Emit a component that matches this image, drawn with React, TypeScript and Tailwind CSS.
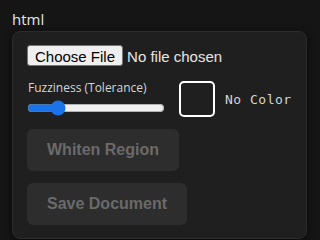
import React, { useState } from "react";

export default function App() {
  const [fuzz, setFuzz] = useState(19);

  return (
    <div className="w-[320px] h-[240px] overflow-hidden bg-[#151515] text-[#e6e6e6] font-['Open_Sans',sans-serif]">
      <div className="px-3 pt-[9px]">
        <div className="text-[15px] leading-[20px]">html</div>
        <div className="mt-[2px] w-[295px] h-[208px] rounded-lg border border-[#2c2c2c] bg-[#1f1f1f] shadow-[0_2px_8px_rgba(0,0,0,0.6)] px-[14px] pt-[14px]">
          {/* File picker */}
          <div className="h-[21px] flex items-center">
            <input
              type="file"
              className="text-[15px] text-[#e6e6e6] font-['Liberation_Sans',sans-serif] w-[260px] file:h-[21px] file:px-[7px] file:mr-[4px] file:bg-[#efefef] file:text-black file:border file:border-[#767676] file:rounded-[3px]"
            />
          </div>

          {/* Fuzziness + color */}
          <div className="mt-[14px] flex items-start">
            <div className="w-[140px] flex flex-col">
              <label className="text-[12px] leading-[14px] text-[#d6d6d6] ml-[1px]">Fuzziness (Tolerance)</label>
              <input
                type="range"
                min={0}
                max={100}
                value={fuzz}
                onChange={(e) => setFuzz(Number(e.target.value))}
                className="mt-[5px] w-[138px] accent-[#1a73e8]"
              />
            </div>
            <div className="ml-[12px] w-[36px] h-[36px] rounded-[5px] border-2 border-white" />
            <span className="ml-[10px] mt-[9px] text-[13px] tracking-[0.5px] text-[#d6d6d6] font-['DejaVu_Sans_Mono',monospace]">
              No Color
            </span>
          </div>

          {/* Actions */}
          <div className="mt-[12px] flex flex-col items-start gap-[12px]">
            <button
              disabled
              className="h-[42px] px-5 rounded-md bg-[#2d2d2d] text-[#6a6a6a] text-[16px] font-bold font-['Liberation_Sans',sans-serif]"
            >
              Whiten Region
            </button>
            <button
              disabled
              className="h-[42px] px-5 rounded-md bg-[#2d2d2d] text-[#6a6a6a] text-[16px] font-bold font-['Liberation_Sans',sans-serif]"
            >
              Save Document
            </button>
          </div>
        </div>
      </div>
    </div>
  );
}
